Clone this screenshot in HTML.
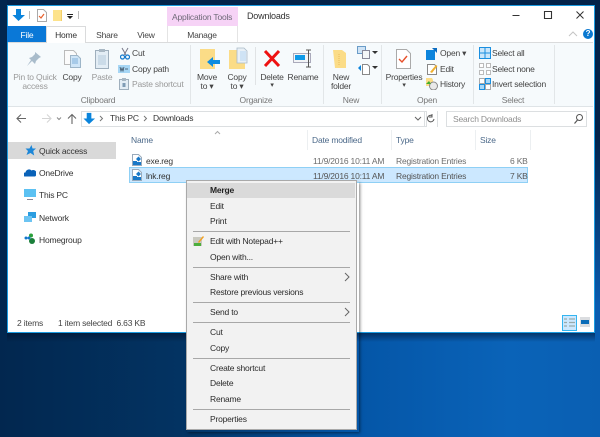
<!DOCTYPE html>
<html><head><meta charset="utf-8">
<style>
html,body{margin:0;padding:0}
#r{position:relative;width:600px;height:437px;overflow:hidden;font-family:"Liberation Sans",sans-serif;font-size:8.5px;letter-spacing:-.2px;color:#333;
background:linear-gradient(90deg,#02274f 0,#033362 30%,#0455a6 58%,#0a63b8 85%,#0a5fb2 100%)}
#r div,#r span,#r svg{position:absolute}
.t{white-space:nowrap;line-height:12px;height:12px}
.g{color:#8a8a8a}
.c{text-align:center;transform:translateX(-50%)}
.m{left:210px;color:#2b2b2b}
.sep{left:193px;width:157px;height:1px;background:#a8a8a8}
</style></head><body><div id="r">
<div style="left:0;top:0;width:600px;height:5px;background:#03234a"></div>
<div style="left:595px;top:0;width:5px;height:340px;background:linear-gradient(#03234a 0,#03234a 40%,#0a5cb0 90%)"></div>
<div style="left:0;top:0;width:7px;height:340px;background:#02274f"></div>
<div style="left:7px;top:332px;width:588px;height:10px;background:linear-gradient(rgba(0,15,40,.6),rgba(0,15,40,0))"></div>
<!-- window -->
<div style="left:7px;top:5px;width:586px;height:326px;background:#fff;border:1px solid #1b9be0"></div>
<!-- title -->
<svg style="left:12px;top:8px" width="14" height="14" viewBox="0 0 14 14"><path d="M4 1h5v6h4l-6.500 6L.5 7H4z" fill="#0a84dc"/></svg>
<div style="left:29px;top:11px;width:1px;height:8px;background:#bbb"></div>
<svg style="left:36px;top:9px" width="11" height="13" viewBox="0 0 11 13"><path d="M1.500.5h6l3 3v9h-9z" fill="#fff" stroke="#aaa"/><path d="M3 7l2 2 3-4" fill="none" stroke="#e8602c" stroke-width="1.200"/></svg>
<div style="left:53px;top:10px;width:8px;height:11px;background:#fde38c;border-right:1px solid #f3cf6a"></div>
<svg style="left:67px;top:14px" width="6" height="6" viewBox="0 0 6 6"><path d="M0 0h6v1H0zM0 2h6L3 5z" fill="#222"/></svg>
<div style="left:78px;top:11px;width:1px;height:8px;background:#bbb"></div>
<div style="left:167px;top:7px;width:71px;height:19px;background:#f6d3f6"></div>
<div class="t" style="left:172px;top:11px;color:#6f6a78">Application Tools</div>
<div class="t" style="left:247px;top:10px;color:#333;font-size:9px">Downloads</div>
<svg style="left:510px;top:8px" width="80" height="16" viewBox="0 0 80 16"><path d="M2.500 7.500h7" stroke="#333" fill="none"/><path d="M34.500 3.500h7v7h-7z" stroke="#333" fill="none" stroke-width="1.100"/><path d="M66.500 3.500l7 7M73.500 3.500l-7 7" stroke="#333" fill="none"/></svg>
<svg style="left:568px;top:29px" width="20" height="12" viewBox="0 0 20 12"><path d="M1 7l4-4 4 4" fill="none" stroke="#c4c4c4"/></svg>
<div style="left:583px;top:29px;width:10px;height:10px;border-radius:5px;background:#0a78d0;color:#fff;font-size:8px;line-height:10px;text-align:center;font-weight:bold">?</div>
<!-- tabs -->
<div style="left:7px;top:26px;width:39px;height:16px;background:#0a78d7"></div>
<div class="t c" style="left:27px;top:29px;color:#fff">File</div>
<div style="left:46px;top:26px;width:40px;height:17px;background:#fff;border:1px solid #dadbdc;border-bottom:0;box-sizing:border-box"></div>
<div class="t c" style="left:66px;top:29px;color:#333">Home</div>
<div class="t c" style="left:107px;top:29px;color:#444">Share</div>
<div class="t c" style="left:146px;top:29px;color:#444">View</div>
<div style="left:167px;top:26px;width:1px;height:17px;background:#e4e4e4"></div>
<div style="left:237px;top:26px;width:1px;height:17px;background:#e4e4e4"></div>
<div class="t c" style="left:202px;top:29px;color:#444">Manage</div>
<!-- ribbon -->
<div style="left:8px;top:42px;width:38px;height:1px;background:#dadbdc"></div>
<div style="left:86px;top:42px;width:507px;height:1px;background:#dadbdc"></div>
<div style="left:8px;top:43px;width:585px;height:63px;background:#f6fafc"></div>
<div style="left:8px;top:106px;width:585px;height:1px;background:#dfe4e7"></div>
<div style="left:190px;top:45px;width:1px;height:59px;background:#e2e6e8"></div>
<div style="left:323px;top:45px;width:1px;height:59px;background:#e2e6e8"></div>
<div style="left:381px;top:45px;width:1px;height:59px;background:#e2e6e8"></div>
<div style="left:473px;top:45px;width:1px;height:59px;background:#e2e6e8"></div>
<div style="left:554px;top:45px;width:1px;height:59px;background:#e2e6e8"></div>
<div style="left:255px;top:47px;width:1px;height:38px;background:#e0e3e5"></div>
<!-- clipboard -->
<svg style="left:26px;top:51px" width="16" height="16" viewBox="0 0 16 16"><path d="M9 1l6 5-2 1-3 3-1 3-3-3-5 5 4-6-2-2 3-1 3-3z" fill="#a9bccb"/></svg>
<div class="t c g" style="left:35px;top:71px;color:#9a9a9a">Pin to Quick</div>
<div class="t c g" style="left:35px;top:80px;color:#9a9a9a">access</div>
<svg style="left:63px;top:49px" width="20" height="20" viewBox="0 0 20 20"><path d="M1.500 1.500h9l3 3v11h-12z" fill="#fbfbfb" stroke="#bbb"/><path d="M7.500 6.500h7l3 3v9h-10z" fill="#cfe5f7" stroke="#9db5c8"/><path d="M9 10h6M9 12h6M9 14h6" stroke="#7fb0da"/></svg>
<div class="t c" style="left:72px;top:71px;color:#444">Copy</div>
<svg style="left:94px;top:48px" width="16" height="22" viewBox="0 0 16 22"><path d="M1.500 2.500h13v18h-13z" fill="#e3edf5" stroke="#9fafbd"/><path d="M5 1h6v3H5z" fill="#a9b8c4"/><path d="M4 8h8M4 10h8M4 12h8M4 14h8M4 16h8" stroke="#b3c9dc"/></svg>
<div class="t c g" style="left:102px;top:71px;color:#999">Paste</div>
<svg style="left:120px;top:47px" width="10" height="13" viewBox="0 0 10 13"><path d="M2 1l4 7M8 1L4 8" stroke="#778" fill="none"/><circle cx="2.500" cy="10" r="2" fill="none" stroke="#1278cc" stroke-width="1.200"/><circle cx="7.500" cy="10" r="2" fill="none" stroke="#1278cc" stroke-width="1.200"/></svg>
<div class="t" style="left:132px;top:47px;color:#444">Cut</div>
<svg style="left:118px;top:65px" width="12" height="8" viewBox="0 0 12 8"><path d="M0 0h12v8H0z" fill="#a6d6f5"/><path d="M2 2l1 4 1-3 1 3 1-4M7 4h3" stroke="#345" fill="none" stroke-width=".7"/></svg>
<div class="t" style="left:132px;top:63px;color:#444">Copy path</div>
<svg style="left:119px;top:78px" width="10" height="12" viewBox="0 0 10 12"><path d="M.5 1.500h9v10h-9z" fill="#e3edf5" stroke="#9fafbd"/><path d="M3 0h4v3H3z" fill="#a9b8c4"/><path d="M3.500 5h3v4h-3z" fill="#7f9cb5"/></svg>
<div class="t g" style="left:132px;top:78px;color:#999">Paste shortcut</div>
<div class="t c g" style="left:98px;top:94px;color:#777">Clipboard</div>
<!-- organize -->
<svg style="left:199px;top:48px" width="23" height="22" viewBox="0 0 23 22"><path d="M1 1h15v20H1z" fill="#fbdc87"/><path d="M8 14l6-5v3h7v4h-7v3z" fill="#0d8ce0"/></svg>
<div class="t c" style="left:207px;top:71px;color:#444">Move</div>
<div class="t c" style="left:207px;top:80px;color:#444">to ▾</div>
<svg style="left:228px;top:47px" width="20" height="24" viewBox="0 0 20 24"><path d="M1 3h16v19H1z" fill="#fbdc87"/><path d="M9 1h7l3 3v12H9z" fill="#e9f0f6" stroke="#a9bac8" stroke-width=".8"/><path d="M12 4h6v10h-6z" fill="#cfe3f5"/></svg>
<div class="t c" style="left:237px;top:71px;color:#444">Copy</div>
<div class="t c" style="left:237px;top:80px;color:#444">to ▾</div>
<svg style="left:263px;top:49px" width="18" height="19" viewBox="0 0 18 19"><path d="M2 2l14 15M16 2L2 17" stroke="#ee1111" stroke-width="3" fill="none"/></svg>
<div class="t c" style="left:272px;top:71px;color:#444">Delete</div>
<div class="t c" style="left:272px;top:80px;color:#444;font-size:7px">▾</div>
<svg style="left:293px;top:49px" width="21" height="20" viewBox="0 0 21 20"><path d="M.5 4.500h17v9H.5z" fill="#f2f4f6" stroke="#aab"/><path d="M2 6h10v5H2z" fill="#0d9ae8"/><path d="M13 1h5M13 18h5M15.500 1v17" stroke="#555" fill="none"/></svg>
<div class="t c" style="left:303px;top:71px;color:#444">Rename</div>
<div class="t c g" style="left:256px;top:94px;color:#777">Organize</div>
<!-- new -->
<svg style="left:333px;top:49px" width="14" height="20" viewBox="0 0 14 20"><path d="M0 1h9l4 3v15H2z" fill="#fbdc87"/><path d="M6 5v12" stroke="#e9bd5b" stroke-dasharray="1 1"/></svg>
<div class="t c" style="left:341px;top:71px;color:#444">New</div>
<div class="t c" style="left:341px;top:80px;color:#444">folder</div>
<svg style="left:357px;top:46px" width="18" height="13" viewBox="0 0 18 13"><path d="M.500.500h8v7h-8z" fill="#cfe3f5" stroke="#6a9cc8"/><path d="M5.500 4.500h7v8h-7z" fill="#f4f6f8" stroke="#889"/></svg>
<svg style="left:372px;top:51px" width="6" height="4" viewBox="0 0 6 4"><path d="M0 0h6L3 3z" fill="#333"/></svg>
<svg style="left:358px;top:63px" width="12" height="12" viewBox="0 0 12 12"><path d="M4.500 1.500h5l2 2v8h-7z" fill="#fff" stroke="#888"/><path d="M0 5l3-3v6z" fill="#0d84dc"/></svg>
<svg style="left:372px;top:66px" width="6" height="4" viewBox="0 0 6 4"><path d="M0 0h6L3 3z" fill="#333"/></svg>
<div class="t c g" style="left:351px;top:94px;color:#777">New</div>
<!-- open -->
<svg style="left:396px;top:49px" width="15" height="20" viewBox="0 0 15 20"><path d="M.5.500h10l4 4v15H.5z" fill="#fff" stroke="#aaa"/><path d="M3 10l3 3 5-6" fill="none" stroke="#e8502a" stroke-width="1.400"/></svg>
<div class="t c" style="left:404px;top:71px;color:#444">Properties</div>
<div class="t c" style="left:404px;top:80px;color:#444;font-size:7px">▾</div>
<svg style="left:426px;top:48px" width="12" height="12" viewBox="0 0 12 12"><path d="M0 2h9v10H0z" fill="#0c84dc"/><path d="M6 0h5v5z" fill="#0c6cc0"/></svg>
<div class="t" style="left:440px;top:47px;color:#444">Open ▾</div>
<svg style="left:427px;top:63px" width="11" height="12" viewBox="0 0 11 12"><path d="M.5 1.500h7l2 2v8h-9z" fill="#fff" stroke="#888"/><path d="M3 9l6-7 1.500 1L5 10z" fill="#f0b030"/></svg>
<div class="t" style="left:440px;top:63px;color:#444">Edit</div>
<svg style="left:426px;top:78px" width="12" height="12" viewBox="0 0 12 12"><path d="M0 0h6l1 2v6H0z" fill="#fbdc87"/><circle cx="7.500" cy="8" r="4" fill="#e9e9e9" stroke="#888"/><path d="M0 6l3-3 2 3z" fill="#3fae2a"/></svg>
<div class="t" style="left:440px;top:78px;color:#444">History</div>
<div class="t c g" style="left:427px;top:94px;color:#777">Open</div>
<!-- select -->
<svg style="left:479px;top:47px" width="12" height="12" viewBox="0 0 12 12"><path d="M.5.500h11v11H.5zM6 0v12M0 6h12" fill="#cbe6fa" stroke="#1a8fe0"/></svg>
<div class="t" style="left:492px;top:47px;color:#444">Select all</div>
<svg style="left:479px;top:63px" width="12" height="12" viewBox="0 0 12 12"><path d="M.5.500h4v4h-4zM7.500.500h4v4h-4zM.5 7.500h4v4h-4zM7.500 7.500h4v4h-4z" fill="#fff" stroke="#bbb"/></svg>
<div class="t" style="left:492px;top:63px;color:#444">Select none</div>
<svg style="left:479px;top:78px" width="12" height="12" viewBox="0 0 12 12"><path d="M.5 6.500h5v5h-5zM6.500.500h5v5h-5z" fill="#a9d8f8" stroke="#1a8fe0"/><path d="M.5.500h5v5h-5zM6.500 6.500h5v5h-5z" fill="#fff" stroke="#aaa"/></svg>
<div class="t" style="left:492px;top:78px;color:#444">Invert selection</div>
<div class="t c g" style="left:513px;top:94px;color:#777">Select</div>
<!-- nav -->
<svg style="left:15px;top:112px" width="70" height="13" viewBox="0 0 70 13"><path d="M11 6.500H2M6 2.500l-4 4 4 4" fill="none" stroke="#666" stroke-width="1.100"/><path d="M27 6.500h9M32 2.500l4 4-4 4" fill="none" stroke="#d5d5d5" stroke-width="1.100"/><path d="M42 5.500l2 2 2-2" fill="none" stroke="#888"/><path d="M57 12V3M53 6.500l4-4 4 4" fill="none" stroke="#666" stroke-width="1.100"/></svg>
<div style="left:81px;top:111px;width:346px;height:16px;background:#fff;border:1px solid #dcdfe1;box-sizing:border-box"></div>
<svg style="left:83px;top:112px" width="13" height="13" viewBox="0 0 14 14"><path d="M4 1h5v6h4l-6.500 6L.5 7H4z" fill="#0a84dc"/></svg>
<svg style="left:99px;top:115px" width="5" height="7" viewBox="0 0 5 7"><path d="M1 1l2.500 2.500L1 6" fill="none" stroke="#777"/></svg>
<div class="t" style="left:110px;top:112px;color:#333">This PC</div>
<svg style="left:143px;top:115px" width="5" height="7" viewBox="0 0 5 7"><path d="M1 1l2.500 2.500L1 6" fill="none" stroke="#777"/></svg>
<div class="t" style="left:153px;top:112px;color:#333">Downloads</div>
<svg style="left:414px;top:116px" width="8" height="6" viewBox="0 0 8 6"><path d="M1 1l3 3 3-3" fill="none" stroke="#666"/></svg>
<div style="left:424px;top:111px;width:1px;height:16px;background:#dcdfe1"></div>
<div style="left:437px;top:111px;width:1px;height:16px;background:#dcdfe1"></div>
<svg style="left:426px;top:113px" width="10" height="11" viewBox="0 0 10 11"><path d="M8 6a3.300 3.300 0 1 1-2-3.500M6 1v3h-3" fill="none" stroke="#555"/></svg>
<div style="left:446px;top:111px;width:141px;height:16px;background:#fff;border:1px solid #dcdfe1;box-sizing:border-box"></div>
<div class="t" style="left:453px;top:113px;color:#8f8f8f">Search Downloads</div>
<svg style="left:573px;top:113px" width="11" height="12" viewBox="0 0 11 12"><circle cx="6.500" cy="4.500" r="3" fill="none" stroke="#555"/><path d="M4.500 7l-3 3.500" stroke="#555" stroke-width="1.200"/></svg>
<!-- sidebar -->
<div style="left:8px;top:142px;width:108px;height:17px;background:#d9d9d9"></div>
<svg style="left:25px;top:145px" width="11" height="11" viewBox="0 0 11 11"><path d="M6.500 0l1 3.500H11L8.200 6l1 4.500L5.500 8 1.500 10l1.500-4L.5 3.500h4z" fill="#1d87d8"/></svg>
<div class="t" style="left:39px;top:145px;color:#333">Quick access</div>
<svg style="left:24px;top:168px" width="12" height="9" viewBox="0 0 12 9"><path d="M1 8.500a2 2 0 0 1 .5-4 3.500 3.500 0 0 1 6-2 3 3 0 0 1 3.500 6z" fill="#0a62b8"/></svg>
<div class="t" style="left:39px;top:167px;color:#333">OneDrive</div>
<svg style="left:24px;top:189px" width="12" height="12" viewBox="0 0 12 12"><path d="M0 0h12v8H0z" fill="#5cc1f2"/><path d="M3 10h6v1H3z" fill="#889"/></svg>
<div class="t" style="left:39px;top:189px;color:#333">This PC</div>
<svg style="left:24px;top:211px" width="12" height="12" viewBox="0 0 12 12"><path d="M4 1h8v6H4z" fill="#2b9de0"/><path d="M0 5h8v6H0z" fill="#6cc4f2"/></svg>
<div class="t" style="left:39px;top:212px;color:#333">Network</div>
<svg style="left:24px;top:233px" width="12" height="12" viewBox="0 0 12 12"><circle cx="2" cy="5" r="1.500" fill="#1278cc"/><circle cx="7" cy="2.500" r="2" fill="#2aa03a"/><circle cx="8" cy="8" r="3" fill="#1a7f3a"/><circle cx="5" cy="5" r="1.500" fill="#1278cc"/></svg>
<div class="t" style="left:39px;top:234px;color:#333">Homegroup</div>
<!-- headers -->
<svg style="left:214px;top:130px" width="7" height="5" viewBox="0 0 7 5"><path d="M1 4l2.500-2.500L6 4" fill="none" stroke="#aaa"/></svg>
<div class="t" style="left:131px;top:134px;color:#4d6a8a">Name</div>
<div class="t" style="left:312px;top:134px;color:#4d6a8a">Date modified</div>
<div class="t" style="left:396px;top:134px;color:#4d6a8a">Type</div>
<div class="t" style="left:480px;top:134px;color:#4d6a8a">Size</div>
<div style="left:307px;top:130px;width:1px;height:20px;background:#eceff1"></div>
<div style="left:391px;top:130px;width:1px;height:20px;background:#eceff1"></div>
<div style="left:475px;top:130px;width:1px;height:20px;background:#eceff1"></div>
<div style="left:530px;top:130px;width:1px;height:20px;background:#eceff1"></div>
<!-- rows -->
<div style="left:129px;top:167px;width:399px;height:16px;background:#cce8ff;border:1px solid #8fd0f5;box-sizing:border-box"></div>
<svg style="left:132px;top:154px" width="10" height="12" viewBox="0 0 10 12"><path d="M.5.500h6l3 3v8h-9z" fill="#fff" stroke="#9ab"/><path d="M1 7h4v4H1z" fill="#1878c8"/><path d="M4 5l2.500-2.500L9 5 6.500 7.500z" fill="#1878c8"/><path d="M5 8h4v3H5z" fill="#1878c8"/></svg>
<svg style="left:132px;top:169px" width="10" height="12" viewBox="0 0 10 12"><path d="M.5.500h6l3 3v8h-9z" fill="#fff" stroke="#9ab"/><path d="M1 7h4v4H1z" fill="#1878c8"/><path d="M4 5l2.500-2.500L9 5 6.500 7.500z" fill="#1878c8"/><path d="M5 8h4v3H5z" fill="#1878c8"/></svg>
<div class="t" style="left:146px;top:155px;color:#333">exe.reg</div>
<div class="t" style="left:146px;top:170px;color:#333">lnk.reg</div>
<div class="t" style="left:313px;top:155px;color:#6d6d6d">11/9/2016 10:11 AM</div>
<div class="t" style="left:313px;top:170px;color:#555">11/9/2016 10:11 AM</div>
<div class="t" style="left:396px;top:155px;color:#6d6d6d">Registration Entries</div>
<div class="t" style="left:396px;top:170px;color:#555">Registration Entries</div>
<div class="t" style="left:510px;top:155px;color:#6d6d6d">6 KB</div>
<div class="t" style="left:510px;top:170px;color:#555">7 KB</div>
<!-- status -->
<div class="t" style="left:17px;top:317px;color:#444">2 items</div>
<div class="t" style="left:58px;top:317px;color:#444">1 item selected&nbsp; 6.63 KB</div>
<div style="left:562px;top:315px;width:15px;height:16px;background:#cce8ff;border:1px solid #34b5f0;box-sizing:border-box"></div>
<svg style="left:564px;top:318px" width="11" height="10" viewBox="0 0 11 10"><path d="M0 1h3M5 1h6M0 4.500h3M5 4.500h6M0 8h3M5 8h6" stroke="#9aa" stroke-width="1.300"/></svg>
<svg style="left:580px;top:317px" width="10" height="10" viewBox="0 0 10 10"><path d="M0 0h10v10H0z" fill="#dbdde0"/><path d="M1 3h8v4H1z" fill="#0a6cb8"/></svg>
<!-- menu -->
<div style="left:187px;top:182px;width:172px;height:250px;box-shadow:1px 1px 3px rgba(0,0,0,.5)"></div>
<div style="left:186px;top:180px;width:171px;height:250px;background:#f2f2f2;border:1px solid #a9a9a9;box-sizing:border-box"></div>
<div style="left:187px;top:183px;width:168px;height:15px;background:#dadada"></div>
<div class="t m" style="top:184px;font-weight:bold;color:#222">Merge</div>
<div class="t m" style="top:200px">Edit</div>
<div class="t m" style="top:215px">Print</div>
<div class="sep" style="top:231px"></div>
<svg style="left:193px;top:236px" width="11" height="11" viewBox="0 0 11 11"><path d="M0 1h9v9H0z" fill="#c9c9c0"/><path d="M1 7h7v3H1z" fill="#4caf3c"/><path d="M5 6l5-6 1 1-5 6z" fill="#f2a020"/></svg>
<div class="t m" style="top:235px">Edit with Notepad++</div>
<div class="t m" style="top:251px">Open with...</div>
<div class="sep" style="top:267px"></div>
<div class="t m" style="top:271px">Share with</div>
<svg style="left:344px;top:272px" width="6" height="10" viewBox="0 0 6 10"><path d="M1 1l4 4-4 4" fill="none" stroke="#666"/></svg>
<div class="t m" style="top:286px">Restore previous versions</div>
<div class="sep" style="top:302px"></div>
<div class="t m" style="top:306px">Send to</div>
<svg style="left:344px;top:307px" width="6" height="10" viewBox="0 0 6 10"><path d="M1 1l4 4-4 4" fill="none" stroke="#666"/></svg>
<div class="sep" style="top:322px"></div>
<div class="t m" style="top:326px">Cut</div>
<div class="t m" style="top:342px">Copy</div>
<div class="sep" style="top:358px"></div>
<div class="t m" style="top:362px">Create shortcut</div>
<div class="t m" style="top:377px">Delete</div>
<div class="t m" style="top:393px">Rename</div>
<div class="sep" style="top:409px"></div>
<div class="t m" style="top:413px">Properties</div>
</div></body></html>
